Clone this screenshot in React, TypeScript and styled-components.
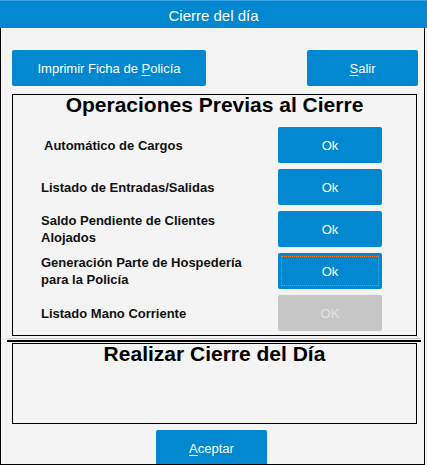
import React from "react";
import styled, { createGlobalStyle } from "styled-components";

const GlobalStyle = createGlobalStyle`
  html, body {
    margin: 0;
    padding: 0;
    background: #f4f4f4;
    width: 427px;
    height: 465px;
    overflow: hidden;
  }
  * { box-sizing: border-box; }
`;

const Window = styled.div`
  width: 427px;
  height: 465px;
  display: flex;
  flex-direction: column;
  background: #f4f4f4;
  font-family: "Liberation Sans", Arial, sans-serif;
`;

const TitleBar = styled.div`
  height: 28px;
  flex-shrink: 0;
  background: #0288d1;
  border-top: 1px solid #3aa6e6;
  color: #ffffff;
  font-size: 15px;
  display: flex;
  align-items: center;
  justify-content: center;
  padding-top: 1px;
`;

const Body = styled.div`
  flex: 1;
  margin-right: 2px;
  border: 1px solid #000;
  border-top: none;
  padding: 22px 6px 0 11px;
  display: flex;
  flex-direction: column;
  overflow: hidden;
  min-height: 0;
`;

const TopBar = styled.div`
  display: flex;
  justify-content: space-between;
  flex-shrink: 0;
`;

const ActionButton = styled.button<{ $w: number; $disabled?: boolean; $focused?: boolean }>`
  position: relative;
  width: ${(p) => p.$w}px;
  height: 36px;
  flex-shrink: 0;
  border: none;
  border-radius: 2px;
  background: ${(p) => (p.$disabled ? "#c6c6c6" : "#0288d1")};
  color: ${(p) => (p.$disabled ? "#e4e4e4" : "#ffffff")};
  font-family: "Liberation Sans", Arial, sans-serif;
  font-size: 13px;
  padding: 0;
  cursor: default;
  outline: none;
  u { text-decoration: underline; text-underline-offset: 2px; }
  &::after {
    content: "";
    display: ${(p) => (p.$focused ? "block" : "none")};
    position: absolute;
    inset: 3px;
    border: 1px dotted #f07c2a;
    pointer-events: none;
  }
`;

const GroupBox = styled.div<{ $h: number; $mt: number }>`
  height: ${(p) => p.$h}px;
  margin-top: ${(p) => p.$mt}px;
  flex-shrink: 0;
  margin-right: 1px;
  border: 1px solid #000;
  display: flex;
  flex-direction: column;
`;

const GroupTitle = styled.div`
  font-size: 21px;
  font-weight: bold;
  line-height: 20px;
  text-align: center;
  color: #000;
`;

const Rows = styled.div`
  margin-top: 12px;
  display: flex;
  flex-direction: column;
  gap: 6px;
`;

const Row = styled.div`
  display: grid;
  grid-template-columns: 222px 1fr 104px;
  align-items: center;
  padding: 0 34px 0 28px;
`;

const Label = styled.div<{ $indent?: number }>`
  font-size: 13px;
  font-weight: bold;
  line-height: 17px;
  color: #111;
  padding-left: ${(p) => p.$indent ?? 0}px;
`;

const Separator = styled.div`
  flex-shrink: 0;
  margin: 2px -3px 0 -5px;
  height: 4px;
  border-top: 1px solid #c8c8c8;
  border-bottom: 2px solid #000;
`;

const BottomButton = styled(ActionButton)`
  margin-top: 6px;
  margin-left: 144px;
`;

const operations = [
  { label: "Automático de Cargos", indent: 3 },
  { label: "Listado de Entradas/Salidas" },
  { label: "Saldo Pendiente de Clientes Alojados" },
  { label: "Generación Parte de Hospedería para la Policía", focused: true },
  { label: "Listado Mano Corriente", disabled: true },
];

export default function App() {
  return (
    <>
      <GlobalStyle />
      <Window>
        <TitleBar>Cierre del día</TitleBar>
        <Body>
          <TopBar>
            <ActionButton $w={194}>
              Imprimir Ficha de <u>P</u>olicía
            </ActionButton>
            <ActionButton $w={111}>
              <u>S</u>alir
            </ActionButton>
          </TopBar>
          <GroupBox $h={242} $mt={8}>
            <GroupTitle>Operaciones Previas al Cierre</GroupTitle>
            <Rows>
              {operations.map((op) => (
                <Row key={op.label}>
                  <Label $indent={op.indent}>{op.label}</Label>
                  <span />
                  <ActionButton $w={104} $disabled={op.disabled} $focused={op.focused}>
                    {op.disabled ? "OK" : "Ok"}
                  </ActionButton>
                </Row>
              ))}
            </Rows>
          </GroupBox>
          <Separator />
          <GroupBox $h={81} $mt={1}>
            <GroupTitle>Realizar Cierre del Día</GroupTitle>
          </GroupBox>
          <BottomButton $w={111}>
            <u>A</u>ceptar
          </BottomButton>
        </Body>
      </Window>
    </>
  );
}
